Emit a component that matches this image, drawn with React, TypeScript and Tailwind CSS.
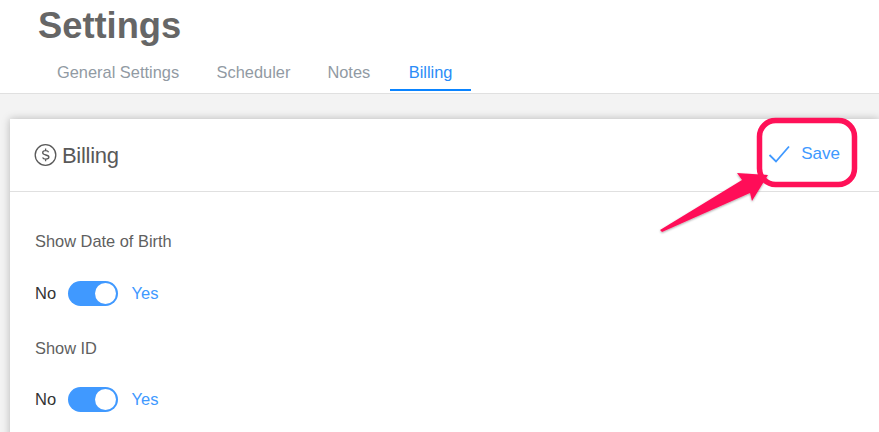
function Toggle() {
  return (
    <div className="flex h-[25px] w-[50px] items-center justify-end rounded-full bg-[#4099ff] pr-[2px]">
      <div className="h-[21px] w-[21px] rounded-full bg-white" />
    </div>
  );
}

function ToggleRow() {
  return (
    <div className="flex items-center text-[16.5px] leading-[25px]">
      <span className="w-[33px] text-[#333333]">No</span>
      <Toggle />
      <span className="ml-[13.5px] text-[#4099ff]">Yes</span>
    </div>
  );
}

export default function App() {
  return (
    <div className="relative h-[432px] w-[879px] overflow-hidden bg-[#f3f3f3] font-['Liberation_Sans',Arial,sans-serif]">
      <header className="h-[94px] border-b border-[#e0e0e0] bg-white pl-[38px]">
        <h1 className="pt-[6px] text-[36.3px] font-bold leading-[39px] text-[#666666]">Settings</h1>
        <nav className="mt-[8px] flex text-[16.4px] leading-[24px] text-[#919aa3]">
          <a className="h-[38px] px-[19px] pt-[7px]">General Settings</a>
          <a className="h-[38px] px-[18.5px] pt-[7px]">Scheduler</a>
          <a className="h-[38px] pl-[18.5px] pr-[19.5px] pt-[7px]">Notes</a>
          <a className="h-[38px] border-b-2 border-[#0a84ff] px-[19px] pt-[7px] text-[#2b8cf7]">Billing</a>
        </nav>
      </header>
      <main className="ml-[10px] mt-[25px] h-[400px] bg-white shadow-[0_0_8px_rgba(0,0,0,0.25)]">
        <div className="flex h-[73px] items-center justify-between border-b border-[#e0e0e0] pl-[24px] pr-[39px]">
          <div className="flex items-center text-[#595959]">
            <svg width="24" height="24" viewBox="0 0 24 24" fill="none" stroke="#595959" strokeWidth="1.3" className="mr-[4px]">
              <circle cx="11.5" cy="12" r="10.3" />
              <path d="M14.6 9.2c-.4-1-1.5-1.5-3-1.5-1.7 0-2.9.8-2.9 2.1 0 3 6.2 1.4 6.2 4.3 0 1.3-1.3 2.1-3.1 2.1-1.6 0-2.8-.6-3.2-1.7M11.6 5.6v2M11.6 16.3v2" />
            </svg>
            <span className="mt-[1px] text-[22px] leading-[30px] tracking-[-0.3px]">Billing</span>
          </div>
          <div className="-mt-[2px] flex items-center text-[#4099ff]">
            <svg width="24" height="20" viewBox="0 0 24 20" fill="none" stroke="#4099ff" strokeWidth="1.8" className="mr-[9px]">
              <path d="M1.5 11l6.5 6.5L21 2.5" />
            </svg>
            <span className="text-[17px] leading-[24px]">Save</span>
          </div>
        </div>
        <div className="pl-[25px]">
          <p className="mt-[37px] text-[16.4px] leading-[24px] text-[#5f5f5f]">Show Date of Birth</p>
          <div className="mt-[28px]"><ToggleRow /></div>
          <p className="mt-[30px] text-[16.4px] leading-[24px] text-[#5f5f5f]">Show ID</p>
          <div className="mt-[27px]"><ToggleRow /></div>
        </div>
      </main>
      <svg className="absolute left-0 top-0" width="879" height="432" viewBox="0 0 879 432" fill="none">
        <defs>
          <filter id="s" x="-20%" y="-20%" width="140%" height="140%">
            <feDropShadow dx="0" dy="1" stdDeviation="1" floodColor="#000" floodOpacity="0.35" />
          </filter>
        </defs>
        <path d="M660 230L742 180L737 173L768 175L752 201L750 193L662 232Z" fill="#ff1158" filter="url(#s)" />
        <rect x="759.5" y="120.5" width="95" height="64" rx="16" stroke="#ff1158" strokeWidth="5.5" />
      </svg>
    </div>
  );
}
